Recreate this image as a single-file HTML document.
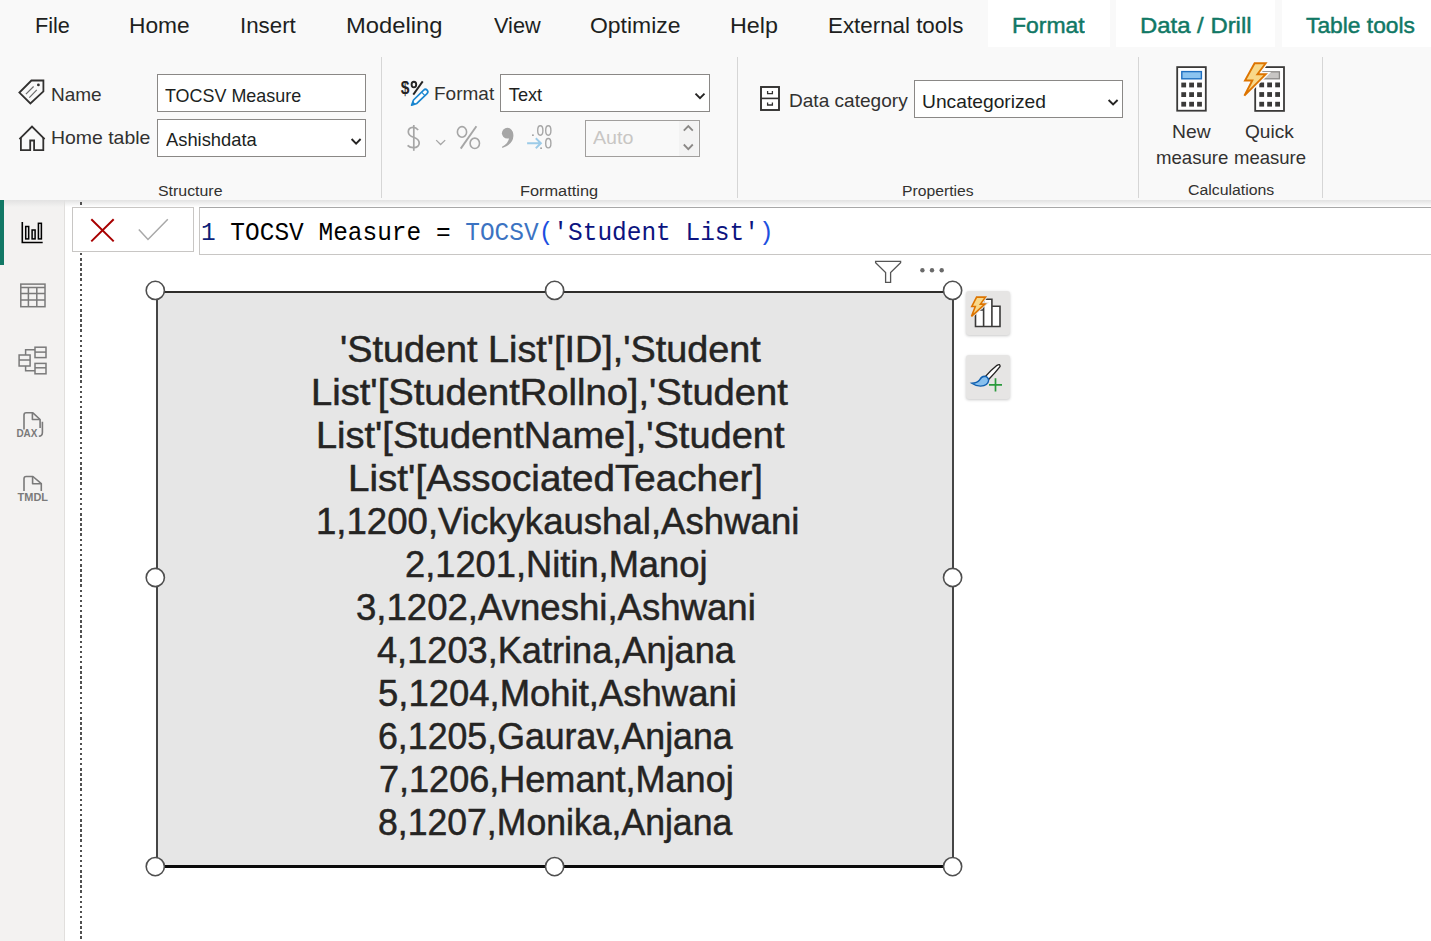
<!DOCTYPE html>
<html><head><meta charset="utf-8">
<style>
*{margin:0;padding:0;box-sizing:border-box}
html,body{width:1431px;height:941px;overflow:hidden;background:#fff;font-family:"Liberation Sans",sans-serif;color:#252423}
.a{position:absolute}
.t{position:absolute;white-space:pre;line-height:1;transform-origin:0 0}
#tabs{left:0;top:0;width:1431px;height:47px;background:#f9f9f9}
#ribbon{left:0;top:47px;width:1431px;height:153px;background:#f9f9f9}
.tab{position:absolute;top:0;height:48px;background:#fff}
.tt{font-size:23px;color:#201f1e}
.tg{color:#117865}
.sep{position:absolute;width:1px;background:#d6d6d6;top:57px;height:141px}
.box{position:absolute;background:#fff;border:1.5px solid #8a8886}
.lbl{font-size:18.5px;color:#323130}
.grp{font-size:15px;color:#323130}
#side{left:0;top:200px;width:65px;height:741px;background:#f3f2f1;border-right:1px solid #e1dfdd}

.vl{position:absolute;white-space:nowrap;font-size:37px;line-height:1;color:#252423;transform-origin:0 0}
.h{position:absolute;width:19px;height:19px;border-radius:50%;background:#fff;border:1.5px solid #4d4d4d}
.btn{position:absolute;width:44px;height:44px;background:#e6e5e4;border-radius:3px;box-shadow:0 1px 3px rgba(0,0,0,.22)}
</style></head><body>
<div id="tabs" class="a"></div>
<div class="tab" style="left:988px;width:122px"></div>
<div class="tab" style="left:1116px;width:159px"></div>
<div class="tab" style="left:1282px;width:149px"></div>

<div id="ribbon" class="a"></div>
<div class="sep" style="left:381px"></div>
<div class="sep" style="left:737px"></div>
<div class="sep" style="left:1138px"></div>
<div class="sep" style="left:1322px"></div>

<!-- Structure -->
<div class="box" style="left:157px;top:74px;width:209px;height:38px"></div>
<div class="box" style="left:157px;top:119px;width:209px;height:38px"></div>

<!-- Formatting -->
<div class="box" style="left:500px;top:74px;width:210px;height:38px"></div>
<div class="box" style="left:585px;top:120px;width:115px;height:37px;background:#f9f9f9;border-color:#a19f9d"></div>

<!-- Properties -->
<div class="box" style="left:914px;top:80px;width:209px;height:38px"></div>

<!-- Calculations -->

<div class="t" style="left:35.23px;top:13.38px;font:22px 'Liberation Sans';color:#201f1e;transform:scaleX(0.9844)">File</div>
<div class="t" style="left:129.43px;top:13.38px;font:22px 'Liberation Sans';color:#201f1e;transform:scaleX(1.0339)">Home</div>
<div class="t" style="left:240.27px;top:13.38px;font:22px 'Liberation Sans';color:#201f1e;transform:scaleX(1.0132)">Insert</div>
<div class="t" style="left:346.44px;top:13.38px;font:22px 'Liberation Sans';color:#201f1e;transform:scaleX(1.0802)">Modeling</div>
<div class="t" style="left:493.60px;top:13.38px;font:22px 'Liberation Sans';color:#201f1e;transform:scaleX(0.9872)">View</div>
<div class="t" style="left:590.36px;top:13.38px;font:22px 'Liberation Sans';color:#201f1e;transform:scaleX(1.0424)">Optimize</div>
<div class="t" style="left:730.08px;top:13.38px;font:22px 'Liberation Sans';color:#201f1e;transform:scaleX(1.0595)">Help</div>
<div class="t" style="left:827.57px;top:13.38px;font:22px 'Liberation Sans';color:#201f1e;transform:scaleX(1.0154)">External tools</div>
<div class="t" style="left:1012.06px;top:13.48px;font:22px 'Liberation Sans';color:#117865;-webkit-text-stroke:0.45px #117865;transform:scaleX(1.042)">Format</div>
<div class="t" style="left:1139.61px;top:13.48px;font:22px 'Liberation Sans';color:#117865;-webkit-text-stroke:0.45px #117865;transform:scaleX(1.0861)">Data / Drill</div>
<div class="t" style="left:1306.20px;top:13.48px;font:22px 'Liberation Sans';color:#117865;-webkit-text-stroke:0.45px #117865;transform:scaleX(1.0362)">Table tools</div>
<div class="t" style="left:51.36px;top:84.59px;font:18.2px 'Liberation Sans';color:#323130;transform:scaleX(1.0447)">Name</div>
<div class="t" style="left:51.33px;top:128.39px;font:18.2px 'Liberation Sans';color:#323130;transform:scaleX(1.0681)">Home table</div>
<div class="t" style="left:165.30px;top:85.89px;font:18.2px 'Liberation Sans';color:#201f1e;transform:scaleX(0.9854)">TOCSV Measure</div>
<div class="t" style="left:165.60px;top:130.39px;font:18.2px 'Liberation Sans';color:#201f1e;transform:scaleX(1.0089)">Ashishdata</div>
<div class="t" style="left:158.27px;top:181.76px;font:15.4px 'Liberation Sans';color:#323130;transform:scaleX(1.0328)">Structure</div>
<div class="t" style="left:434.26px;top:84.49px;font:18.2px 'Liberation Sans';color:#323130;transform:scaleX(1.0446)">Format</div>
<div class="t" style="left:508.80px;top:85.49px;font:18.2px 'Liberation Sans';color:#201f1e">Text</div>
<div class="t" style="left:593.00px;top:128.39px;font:18.2px 'Liberation Sans';color:#c8c6c4;transform:scaleX(1.0811)">Auto</div>
<div class="t" style="left:520.44px;top:181.76px;font:15.4px 'Liberation Sans';color:#323130;transform:scaleX(1.0611)">Formatting</div>
<div class="t" style="left:788.75px;top:90.89px;font:18.2px 'Liberation Sans';color:#323130;transform:scaleX(1.0482)">Data category</div>
<div class="t" style="left:921.74px;top:91.59px;font:18.2px 'Liberation Sans';color:#201f1e;transform:scaleX(1.0574)">Uncategorized</div>
<div class="t" style="left:901.98px;top:181.96px;font:15.4px 'Liberation Sans';color:#323130;transform:scaleX(1.0203)">Properties</div>
<div class="t" style="left:1172.44px;top:121.99px;font:18.2px 'Liberation Sans';color:#323130;transform:scaleX(1.06)">New</div>
<div class="t" style="left:1155.68px;top:148.29px;font:18.2px 'Liberation Sans';color:#323130;transform:scaleX(1.0232)">measure</div>
<div class="t" style="left:1245.45px;top:121.99px;font:18.2px 'Liberation Sans';color:#323130;transform:scaleX(1.0511)">Quick</div>
<div class="t" style="left:1233.78px;top:148.29px;font:18.2px 'Liberation Sans';color:#323130;transform:scaleX(1.0174)">measure</div>
<div class="t" style="left:1187.57px;top:181.26px;font:15.4px 'Liberation Sans';color:#323130;transform:scaleX(1.0293)">Calculations</div>

<div id="side" class="a"></div>


<svg class="a" style="left:0;top:0" width="1431" height="941" viewBox="0 0 1431 941">
<!-- tag icon -->
<g fill="none" stroke="#323130" stroke-width="1.8" stroke-linejoin="miter">
<path d="M31.4 80.5 H43.4 V91.4 L30.4 103.4 L19.4 92.6 Z"/>
</g>
<circle cx="38.4" cy="84.9" r="1.4" fill="#323130"/>
<path d="M25.9 94.1 L33.6 86.5 M29.3 97.6 L36.8 89.9" stroke="#6b6b6b" stroke-width="1.2"/>
<!-- house icon -->
<path d="M19.4 139.2 L32 126.6 L44.6 139.2" fill="none" stroke="#323130" stroke-width="1.8"/>
<path d="M20.9 137.5 V150.2 H30.2 V140.5 H34.1 V150.2 H43.3 V137.5" fill="none" stroke="#323130" stroke-width="1.8"/>
<!-- $% pencil -->
<text transform="translate(400.8 93.8) scale(0.92 1.08)" font-family="Liberation Sans" font-weight="bold" font-size="17" fill="#252423">$</text>
<ellipse cx="413.9" cy="84.6" rx="2.3" ry="2.8" fill="none" stroke="#252423" stroke-width="1.9"/>
<path d="M422.7 81.4 L413.3 94.6" stroke="#252423" stroke-width="1.9"/>
<g transform="translate(411.6 105.2) rotate(-44.2)">
<path d="M0 0 L5 -2.6 H19.2 A2.6 2.6 0 0 1 19.2 2.6 H5 Z" fill="#f9f9f9" stroke="#f9f9f9" stroke-width="4"/>
<path d="M0 0 L5 -2.4 H19.2 A2.4 2.4 0 0 1 19.2 2.4 H5 Z" fill="#fff" stroke="#1a86d0" stroke-width="1.7" stroke-linejoin="round"/>
<path d="M16.2 -2.4 V2.4" stroke="#1a86d0" stroke-width="1.2"/>
<path d="M0 0 L3.6 -2 V2 Z" fill="#1a86d0"/>
</g>
<!-- disabled formatting row -->
<g fill="none" stroke="#a6a6a6" stroke-width="1.7">
<path d="M418.2 130 Q415.8 127.3 413 127.4 Q408.2 127.6 408.3 132 Q408.5 135.6 413.6 137.3 Q419.2 139.2 419.2 143 Q419.1 147.6 413.4 147.7 Q409.8 147.7 407.6 145.4"/>
<path d="M413.8 125 V150.8"/>
</g>
<path d="M436.2 140.1 L440.6 144.5 L445.2 140.1" fill="none" stroke="#a6a6a6" stroke-width="1.3"/>
<g fill="none" stroke="#a6a6a6" stroke-width="1.6">
<ellipse cx="462" cy="131.9" rx="4.6" ry="5.3"/>
<ellipse cx="474.8" cy="143.3" rx="4.7" ry="5.2"/>
</g>
<path d="M476.4 126.3 L460.7 148.6" stroke="#a6a6a6" stroke-width="1.9"/>
<circle cx="507.3" cy="133.2" r="5.4" fill="#a6a6a6"/>
<path d="M510.5 129.5 Q513.6 131.5 513.4 136 Q513 144.5 502.3 147.9 L502 146.8 Q508.6 143.3 509.2 137.5 Z" fill="#a6a6a6"/>
<g fill="none" stroke="#a6a6a6" stroke-width="1.4">
<ellipse cx="540.3" cy="130.5" rx="2.6" ry="4.7"/>
<ellipse cx="548.3" cy="130.5" rx="2.6" ry="4.7"/>
<ellipse cx="548.3" cy="143.2" rx="2.6" ry="4.7"/>
</g>
<rect x="532" y="134.4" width="1.8" height="1.6" fill="#a6a6a6"/>
<rect x="540.2" y="147.4" width="1.8" height="1.6" fill="#a6a6a6"/>
<path d="M527.1 143.3 H541 M535.8 138.3 L540.9 143.3 L535.8 148.2" fill="none" stroke="#9ccbe8" stroke-width="1.9"/>
<!-- select chevrons -->
<path d="M351.6 139 L356.1 143.6 L360.6 139" fill="none" stroke="#252423" stroke-width="1.9"/>
<path d="M695.5 93.6 L700 98.2 L704.5 93.6" fill="none" stroke="#252423" stroke-width="1.9"/>
<path d="M1108.6 100 L1113.1 104.4 L1117.6 100" fill="none" stroke="#252423" stroke-width="1.9"/>
<!-- spin arrows -->
<rect x="679" y="121" width="19.5" height="35" fill="#f3f3f3"/>
<path d="M683.8 130.6 L688.3 126 L692.8 130.6 M683.8 144.5 L688.3 149.1 L692.8 144.5" fill="none" stroke="#8a8886" stroke-width="1.8"/>
<!-- data category cabinet -->
<rect x="761" y="87" width="18" height="23" fill="#fff" stroke="#323130" stroke-width="1.9"/>
<path d="M761 98.4 H779" stroke="#323130" stroke-width="1.6"/>
<path d="M767.6 91 V93.6 H772.4 V91 M767.6 102.4 V105 H772.4 V102.4" fill="none" stroke="#323130" stroke-width="1.3"/>
<!-- new measure calc -->
<rect x="1177.2" y="67.1" width="28.6" height="43.6" fill="#fff" stroke="#3b3a39" stroke-width="1.8"/>
<rect x="1181.8" y="71.6" width="19.6" height="7.2" fill="#8cc4f0" stroke="#1f6fc0" stroke-width="1.4"/>
<g fill="#3b3a39">
<rect x="1181.3" y="82.6" width="4.8" height="4.8"/><rect x="1189.2" y="82.6" width="4.8" height="4.8"/><rect x="1197.1" y="82.6" width="4.8" height="4.8"/>
<rect x="1181.3" y="92.2" width="4.8" height="4.8"/><rect x="1189.2" y="92.2" width="4.8" height="4.8"/><rect x="1197.1" y="92.2" width="4.8" height="4.8"/>
<rect x="1181.3" y="101.8" width="4.8" height="4.8"/><rect x="1189.2" y="101.8" width="4.8" height="4.8"/><rect x="1197.1" y="101.8" width="4.8" height="4.8"/>
</g>
<!-- quick measure calc -->
<rect x="1255.2" y="67.1" width="28.8" height="43.8" fill="#fff" stroke="#3b3a39" stroke-width="1.8"/>
<rect x="1259.6" y="71.8" width="19.8" height="7" fill="#c8c6c4" stroke="#8a8886" stroke-width="1.3"/>
<g fill="#3b3a39">
<rect x="1259.3" y="82.5" width="4.8" height="4.8"/><rect x="1267.2" y="82.5" width="4.8" height="4.8"/><rect x="1275.2" y="82.5" width="4.8" height="4.8"/>
<rect x="1259.3" y="92.1" width="4.8" height="4.8"/><rect x="1267.2" y="92.1" width="4.8" height="4.8"/><rect x="1275.2" y="92.1" width="4.8" height="4.8"/>
<rect x="1259.3" y="101.8" width="4.8" height="4.8"/><rect x="1267.2" y="101.8" width="4.8" height="4.8"/><rect x="1275.2" y="101.8" width="4.8" height="4.8"/>
</g>
<path d="M1254.6 63.2 H1265.7 L1257.4 74.3 H1265.7 L1244.4 95.7 L1252.3 80.5 H1245 Z" fill="#f8d889" stroke="#fafafa" stroke-width="4.5" stroke-linejoin="miter"/>
<path d="M1254.6 63.2 H1265.7 L1257.4 74.3 H1265.7 L1244.4 95.7 L1252.3 80.5 H1245 Z" fill="#f8d889" stroke="#dd7400" stroke-width="1.9" stroke-linejoin="miter"/>
</svg>

<!-- ribbon shadow -->
<div class="a" style="left:0;top:200px;width:1431px;height:7px;background:linear-gradient(#e2e2e2,rgba(255,255,255,0))"></div>
<div class="a" style="left:0;top:200px;width:4px;height:65px;background:#117865"></div>
<!-- dotted line -->
<div class="a" style="left:79.8px;top:202px;width:2.4px;height:739px;background:repeating-linear-gradient(#505050 0 2.5px,transparent 2.5px 5.1px)"></div>
<!-- formula bar -->
<div class="a" style="left:72px;top:207px;width:122px;height:45px;background:#fff;border:1px solid #c8c6c4"></div>
<div class="a" style="left:199px;top:207px;width:1240px;height:48px;background:#fff;border:1px solid #c8c6c4;border-top-color:#a8a8a8"></div>
<div class="t" style="left:200.72px;top:217.59px;font:26px 'Liberation Mono';color:#000;transform:scaleX(0.9409)"><span style="color:#0e1f78">1</span> TOCSV Measure = <span style="color:#3b73c2">TOCSV</span><span style="color:#1c4fe0">(</span><span style="color:#0c1480">'Student List'</span><span style="color:#1c4fe0">)</span></div>

<!-- visual -->
<div class="a" style="left:156px;top:291px;width:798px;height:577px;background:#e6e6e6;border-style:solid;border-color:#2e2d2b #454545 #0a0a0a #454545;border-width:2px 2px 3px 2px"></div>
<div class="t" style="left:339.56px;top:329.28px;font:37px 'Liberation Sans';color:#252423;-webkit-text-stroke:0.5px #252423;transform:scaleX(1.0215)">'Student List'[ID],'Student</div>
<div class="t" style="left:311.11px;top:372.28px;font:37px 'Liberation Sans';color:#252423;-webkit-text-stroke:0.5px #252423;transform:scaleX(1.0309)">List'[StudentRollno],'Student</div>
<div class="t" style="left:315.62px;top:415.28px;font:37px 'Liberation Sans';color:#252423;-webkit-text-stroke:0.5px #252423;transform:scaleX(1.0265)">List'[StudentName],'Student</div>
<div class="t" style="left:348.27px;top:458.28px;font:37px 'Liberation Sans';color:#252423;-webkit-text-stroke:0.5px #252423;transform:scaleX(1.0434)">List'[AssociatedTeacher]</div>
<div class="t" style="left:315.52px;top:501.28px;font:37px 'Liberation Sans';color:#252423;-webkit-text-stroke:0.5px #252423;transform:scaleX(0.9889)">1,1200,Vickykaushal,Ashwani</div>
<div class="t" style="left:404.84px;top:544.28px;font:37px 'Liberation Sans';color:#252423;-webkit-text-stroke:0.5px #252423;transform:scaleX(0.9803)">2,1201,Nitin,Manoj</div>
<div class="t" style="left:356.31px;top:587.28px;font:37px 'Liberation Sans';color:#252423;-webkit-text-stroke:0.5px #252423;transform:scaleX(0.9883)">3,1202,Avneshi,Ashwani</div>
<div class="t" style="left:376.60px;top:630.28px;font:37px 'Liberation Sans';color:#252423;-webkit-text-stroke:0.5px #252423;transform:scaleX(0.9776)">4,1203,Katrina,Anjana</div>
<div class="t" style="left:378.01px;top:673.28px;font:37px 'Liberation Sans';color:#252423;-webkit-text-stroke:0.5px #252423;transform:scaleX(0.9856)">5,1204,Mohit,Ashwani</div>
<div class="t" style="left:377.87px;top:716.28px;font:37px 'Liberation Sans';color:#252423;-webkit-text-stroke:0.5px #252423;transform:scaleX(0.965)">6,1205,Gaurav,Anjana</div>
<div class="t" style="left:379.25px;top:759.28px;font:37px 'Liberation Sans';color:#252423;-webkit-text-stroke:0.5px #252423;transform:scaleX(0.9744)">7,1206,Hemant,Manoj</div>
<div class="t" style="left:378.04px;top:802.28px;font:37px 'Liberation Sans';color:#252423;-webkit-text-stroke:0.5px #252423;transform:scaleX(0.962)">8,1207,Monika,Anjana</div>

<svg class="a" style="left:0;top:0" width="1431" height="941"><circle cx="155.3" cy="290.4" r="9.1" fill="#fff" stroke="#4f4f4f" stroke-width="1.6"/><circle cx="554.6" cy="290.4" r="9.1" fill="#fff" stroke="#4f4f4f" stroke-width="1.6"/><circle cx="952.6" cy="290.4" r="9.1" fill="#fff" stroke="#4f4f4f" stroke-width="1.6"/><circle cx="155.3" cy="577.5" r="9.1" fill="#fff" stroke="#4f4f4f" stroke-width="1.6"/><circle cx="952.6" cy="577.5" r="9.1" fill="#fff" stroke="#4f4f4f" stroke-width="1.6"/><circle cx="155.3" cy="866.6" r="9.1" fill="#fff" stroke="#4f4f4f" stroke-width="1.6"/><circle cx="554.6" cy="866.6" r="9.1" fill="#fff" stroke="#4f4f4f" stroke-width="1.6"/><circle cx="952.6" cy="866.6" r="9.1" fill="#fff" stroke="#4f4f4f" stroke-width="1.6"/></svg>


<div class="btn" style="left:965.5px;top:291px"></div>
<div class="btn" style="left:965.5px;top:355px"></div>

<svg class="a" style="left:0;top:0" width="1431" height="941" viewBox="0 0 1431 941">
<!-- sidebar report icon -->
<path d="M22.3 221.9 V242.5 H42.7" fill="none" stroke="#000" stroke-width="1.6"/>
<g fill="#e8e8e8" stroke="#000" stroke-width="1.5">
<rect x="25.7" y="226.5" width="3" height="12.4"/>
<rect x="32.1" y="230" width="3" height="8.9"/>
<rect x="38.4" y="223.3" width="3" height="15.6"/>
</g>
<!-- table icon -->
<g fill="none" stroke="#7a7a7a" stroke-width="1.5">
<rect x="20.8" y="284.1" width="24.2" height="22.6"/>
<path d="M20.8 287.4 H45 M20.8 293.6 H45 M20.8 300.1 H45 M28.4 287.4 V306.7 M36.8 287.4 V306.7"/>
</g>
<!-- model icon -->
<g fill="none" stroke="#7a7a7a" stroke-width="1.5">
<rect x="19.1" y="355" width="11" height="11"/><path d="M19.1 360 H30.1"/>
<rect x="35" y="347.2" width="11" height="10.4"/><path d="M35 352.1 H46"/>
<rect x="35" y="363.4" width="11" height="10.4"/><path d="M35 367.8 H46"/>
<path d="M25.6 355 V349.8 H35 M25.6 366 V370.8 H35"/>
</g>
<!-- DAX icon -->
<g fill="none" stroke="#7a7a7a" stroke-width="1.6" stroke-linejoin="round">
<path d="M24 429.6 V415 Q24 412.8 26.2 412.8 H32.9 L40.1 419.5 V428"/>
<path d="M32.4 413 V419.5 H40"/>
<path d="M42.4 421.7 V432.5 Q42.4 436 38.8 436.3"/>
</g>
<text x="16.4" y="437.3" font-family="Liberation Sans" font-weight="bold" font-size="10.2" fill="#7a7a7a" textLength="21" lengthAdjust="spacingAndGlyphs">DAX</text>
<!-- TMDL icon -->
<g fill="none" stroke="#7a7a7a" stroke-width="1.6" stroke-linejoin="round">
<path d="M24 491 V478.7 Q24 476.5 26.2 476.5 H32.9 L41.3 483.7 V491"/>
<path d="M32.6 476.8 V483.7 H41"/>
</g>
<text x="17.6" y="501.2" font-family="Liberation Sans" font-weight="bold" font-size="10.6" fill="#7a7a7a" textLength="30.4" lengthAdjust="spacingAndGlyphs">TMDL</text>
<!-- X and check -->
<path d="M91.3 219.3 L113.7 241.4 M113.7 219.3 L91.3 241.4" stroke="#a80000" stroke-width="2"/>
<path d="M138.8 229.5 L148 239.5 L167.8 219.3" fill="none" stroke="#a8a8a8" stroke-width="1.5"/>
<!-- filter icon -->
<path d="M875.6 261.4 H900.6 V262.8 L890.6 272.6 V282.3 H885.6 V272.6 L875.6 262.8 Z" fill="none" stroke="#555" stroke-width="1.3" stroke-linejoin="miter"/>
<circle cx="922.4" cy="270.3" r="2.2" fill="#6a6a6a"/><circle cx="932" cy="270.3" r="2.2" fill="#6a6a6a"/><circle cx="941.7" cy="270.3" r="2.2" fill="#6a6a6a"/>
<!-- button1 bars -->
<path d="M975.5 326.5 V310 H983.6 V326.5 Z M983.6 326.5 V299.2 H991.9 V326.5 Z M991.9 326.5 V306.2 H1000 V326.5 Z" fill="#fff" stroke="#3b3a39" stroke-width="1.6"/>
<path d="M976.6 297.1 H985.5 L980.4 304.1 H984.9 L971.5 316.3 L975.3 306.5 H971.8 Z" fill="#f8d889" stroke="#e6e5e4" stroke-width="3.5"/>
<path d="M976.6 297.1 H985.5 L980.4 304.1 H984.9 L971.5 316.3 L975.3 306.5 H971.8 Z" fill="#f8d889" stroke="#dd7400" stroke-width="1.6"/>
<!-- button2 brush -->
<path d="M985.3 376.6 Q990 371 997 365.3 Q1000.3 363.4 1000 366.6 Q995 373 988.6 379.4 Z" fill="#fff" stroke="#252423" stroke-width="1.4" stroke-linejoin="round"/>
<path d="M971.8 383.3 Q977 383.2 979.6 380 Q981.5 376.4 984.5 376.3 Q988.4 376.6 988.6 380.6 Q988 385.7 980.5 386.1 Q975.5 386 971.8 383.3 Z" fill="#88c0ee" stroke="#1060b0" stroke-width="1.4"/>
<path d="M989 384.8 H1002 M995.5 378.2 V391.6" stroke="#2a9a3c" stroke-width="1.7"/>
</svg>
</body></html>
